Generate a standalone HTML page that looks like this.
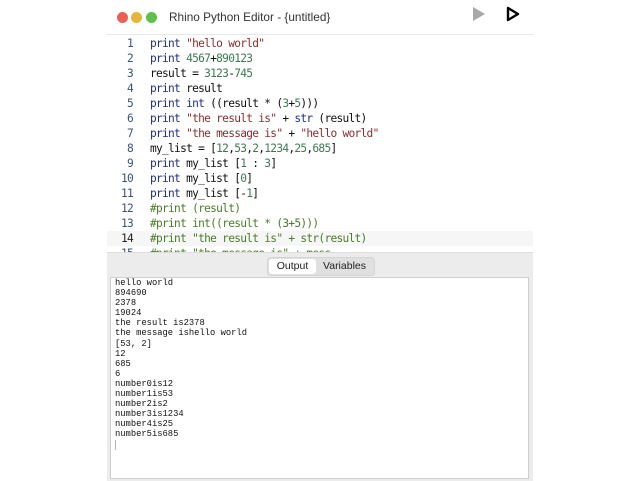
<!DOCTYPE html>
<html><head><style>
body{margin:0;width:640px;height:480px;background:#fff;position:relative;overflow:hidden;font-family:"Liberation Sans",sans-serif}
.dot{position:absolute;top:12px;width:11px;height:11px;border-radius:50%}
.title{position:absolute;left:169px;top:10px;font-size:11.8px;color:#333}
.sep{position:absolute;left:107px;width:426px;top:34px;height:1px;background:#e8e8e8}
.code{position:absolute;left:107px;top:36px;width:426px;height:216px;overflow:hidden;font-family:"DejaVu Sans Mono",monospace;font-size:11.2px;letter-spacing:-0.72px}
.ln{position:absolute;height:15px;line-height:15px;width:426px}
.n{position:absolute;left:0;width:26px;text-align:right;color:#35557f}
.c{position:absolute;left:43px;color:#111;white-space:pre}
.k{color:#1f2f86}.s{color:#8a2e2e}.d{color:#3c7a52}.m{color:#4a7d2a}
.panel{position:absolute;left:107px;top:252px;width:426px;height:228px;background:#ececec;border-top:1px solid #ddd}
.tabs{position:absolute;left:267px;top:257px;width:106px;height:17px;background:#e0e0e0;border-radius:4px;border:1px solid #d4d4d4;font-size:10.5px}
.t1{position:absolute;left:1px;top:1px;width:47px;height:15px;background:#fff;border-radius:3px;text-align:center;line-height:15px;color:#222}
.t2{position:absolute;left:48px;top:1px;width:57px;height:15px;text-align:center;line-height:15px;color:#222}
.out{position:absolute;left:110px;top:277px;width:419px;height:202px;background:#fff;border:1px solid #cfcfcf;font-family:"Liberation Mono",monospace;font-size:8.8px;line-height:10.1px;color:#111;white-space:pre;padding:0 4px;box-sizing:border-box}
</style></head><body>
<div class="dot" style="left:117px;background:#ec5f57"></div>
<div class="dot" style="left:131px;background:#e5b63b"></div>
<div class="dot" style="left:146px;background:#5fc04a"></div>
<div class="title">Rhino Python Editor - {untitled}</div>
<svg style="position:absolute;left:472px;top:6px" width="14" height="16"><path d="M1 1L13 8L1 15Z" fill="#a8a8a8"/></svg>
<svg style="position:absolute;left:506px;top:6px" width="14" height="16"><path d="M2 2L12 8L2 14Z" fill="none" stroke="#000" stroke-width="2.4" stroke-linejoin="round"/></svg>
<div class="sep"></div>
<div class="code">
<div class="ln" style="top:0px"><span class="n">1</span><span class="c"><span class="k">print</span> <span class="s">"hello world"</span></span></div>
<div class="ln" style="top:15px"><span class="n">2</span><span class="c"><span class="k">print</span> <span class="d">4567</span>+<span class="d">890123</span></span></div>
<div class="ln" style="top:30px"><span class="n">3</span><span class="c">result = <span class="d">3123</span>-<span class="d">745</span></span></div>
<div class="ln" style="top:45px"><span class="n">4</span><span class="c"><span class="k">print</span> result</span></div>
<div class="ln" style="top:60px"><span class="n">5</span><span class="c"><span class="k">print</span> <span class="k">int</span> ((result * (<span class="d">3</span>+<span class="d">5</span>)))</span></div>
<div class="ln" style="top:75px"><span class="n">6</span><span class="c"><span class="k">print</span> <span class="s">"the result is"</span> + <span class="k">str</span> (result)</span></div>
<div class="ln" style="top:90px"><span class="n">7</span><span class="c"><span class="k">print</span> <span class="s">"the message is"</span> + <span class="s">"hello world"</span></span></div>
<div class="ln" style="top:105px"><span class="n">8</span><span class="c">my_list = [<span class="d">12</span>,<span class="d">53</span>,<span class="d">2</span>,<span class="d">1234</span>,<span class="d">25</span>,<span class="d">685</span>]</span></div>
<div class="ln" style="top:120px"><span class="n">9</span><span class="c"><span class="k">print</span> my_list [<span class="d">1</span> : <span class="d">3</span>]</span></div>
<div class="ln" style="top:135px"><span class="n">10</span><span class="c"><span class="k">print</span> my_list [<span class="d">0</span>]</span></div>
<div class="ln" style="top:150px"><span class="n">11</span><span class="c"><span class="k">print</span> my_list [-<span class="d">1</span>]</span></div>
<div class="ln" style="top:165px"><span class="n">12</span><span class="c m">#print (result)</span></div>
<div class="ln" style="top:180px"><span class="n">13</span><span class="c m">#print int((result * (3+5)))</span></div>
<div class="ln" style="top:195px;background:#f6f6f6"><span class="n" style="color:#222">14</span><span class="c m">#print "the result is" + str(result)</span></div>
<div class="ln" style="top:210px"><span class="n">15</span><span class="c m">#print "the message is" + mess</span></div>
</div>
<div class="panel"></div>
<div class="tabs"><div class="t1">Output</div><div class="t2">Variables</div></div>
<div class="out">hello world
894690
2378
19024
the result is2378
the message ishello world
[53, 2]
12
685
6
number0is12
number1is53
number2is2
number3is1234
number4is25
number5is685
<span style="display:inline-block;width:1px;height:10px;background:#9ab6dd"></span></div>
</body></html>
